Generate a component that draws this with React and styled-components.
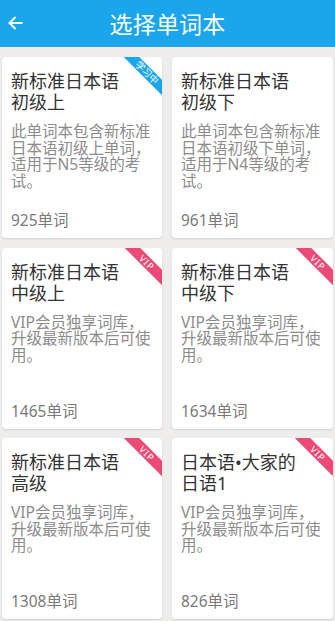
import React from "react";
import styled, { createGlobalStyle } from "styled-components";

const Global = createGlobalStyle`
  html, body { margin: 0; padding: 0; background: #eeedeb; overflow: hidden; }
  body { font-family: "Noto Sans", "Noto Sans CJK SC", sans-serif; }
  * { box-sizing: border-box; }
`;

const Page = styled.div`
  width: 335px;
  height: 621px;
  background: #eeedeb;
  display: flex;
  flex-direction: column;
`;

const Header = styled.header`
  height: 47px;
  flex: none;
  background: #1ba6ec;
  display: flex;
  align-items: center;
  position: relative;
`;

const BackButton = styled.button`
  border: 0;
  background: transparent;
  padding: 0;
  margin-left: 7px;
  width: 16px;
  height: 16px;
  display: flex;
  align-items: center;
  justify-content: center;
  position: absolute;
  left: 0;
  top: 15px;
`;

const Title = styled.h1`
  flex: 1;
  margin: 0;
  text-align: center;
  color: #fff;
  font-family: "Noto Sans CJK SC", sans-serif;
  font-size: 23px;
  font-weight: 400;
  line-height: 47px;
  letter-spacing: 0.2px;
`;

const Grid = styled.div`
  display: grid;
  grid-template-columns: 160px 161px;
  grid-auto-rows: 181px;
  column-gap: 10px;
  row-gap: 9.5px;
  padding: 10px 2px 0 2px;
`;

const Card = styled.div`
  position: relative;
  overflow: hidden;
  background: #fff;
  border-radius: 4px;
  box-shadow: 0 1px 2px rgba(0, 0, 0, 0.12);
  display: flex;
  flex-direction: column;
  padding: 14px 10px 9px 9px;
`;

const CardTitle = styled.div`
  color: #333;
  font-size: 18px;
  line-height: 21px;
  margin-right: 24px;
`;

const Desc = styled.div`
  margin-top: 10px;
  color: #8c8c8c;
  font-size: 15.5px;
  line-height: 16.7px;
`;

const Count = styled.div`
  margin-top: auto;
  color: #7a7a7a;
  font-size: 15.5px;
  line-height: 17px;
`;

const Ribbon = styled.div`
  position: absolute;
  top: 9.5px;
  right: -15.5px;
  width: 62px;
  height: 11px;
  transform: rotate(45deg);
  background: ${(p) => (p.$vip ? "#ea4a75" : "#1ba6ec")};
  color: #fff;
  font-family: ${(p) => (p.$vip ? '"Noto Sans", sans-serif' : '"Noto Sans CJK SC", sans-serif')};
  font-size: ${(p) => (p.$vip ? "9px" : "9.5px")};
  line-height: 11px;
  text-align: center;
  letter-spacing: ${(p) => (p.$vip ? "1px" : "0")};
`;

const books = [
  {
    title: "新标准日本语初级上",
    desc: "此单词本包含新标准日本语初级上单词，适用于N5等级的考试。",
    count: 925,
    tag: "学习中",
  },
  {
    title: "新标准日本语初级下",
    desc: "此单词本包含新标准日本语初级下单词，适用于N4等级的考试。",
    count: 961,
  },
  { title: "新标准日本语中级上", desc: "VIP会员独享词库，升级最新版本后可使用。", count: 1465, tag: "VIP" },
  { title: "新标准日本语中级下", desc: "VIP会员独享词库，升级最新版本后可使用。", count: 1634, tag: "VIP" },
  { title: "新标准日本语高级", desc: "VIP会员独享词库，升级最新版本后可使用。", count: 1308, tag: "VIP" },
  { title: "日本语•大家的日语1", desc: "VIP会员独享词库，升级最新版本后可使用。", count: 826, tag: "VIP" },
];

export default function App() {
  return (
    <Page>
      <Global />
      <Header>
        <BackButton aria-label="back">
          <svg width="15" height="14" viewBox="0 0 15 14" fill="none" stroke="#fff" strokeWidth="1.8" strokeLinecap="round" strokeLinejoin="round">
            <path d="M14 7H1.5" />
            <path d="M7 1.5L1.5 7L7 12.5" />
          </svg>
        </BackButton>
        <Title>选择单词本</Title>
      </Header>
      <Grid>
        {books.map((b, i) => (
          <Card key={i}>
            {b.tag && <Ribbon $vip={b.tag === "VIP"}>{b.tag}</Ribbon>}
            <CardTitle>{b.title}</CardTitle>
            <Desc>{b.desc}</Desc>
            <Count>{b.count}单词</Count>
          </Card>
        ))}
      </Grid>
    </Page>
  );
}
